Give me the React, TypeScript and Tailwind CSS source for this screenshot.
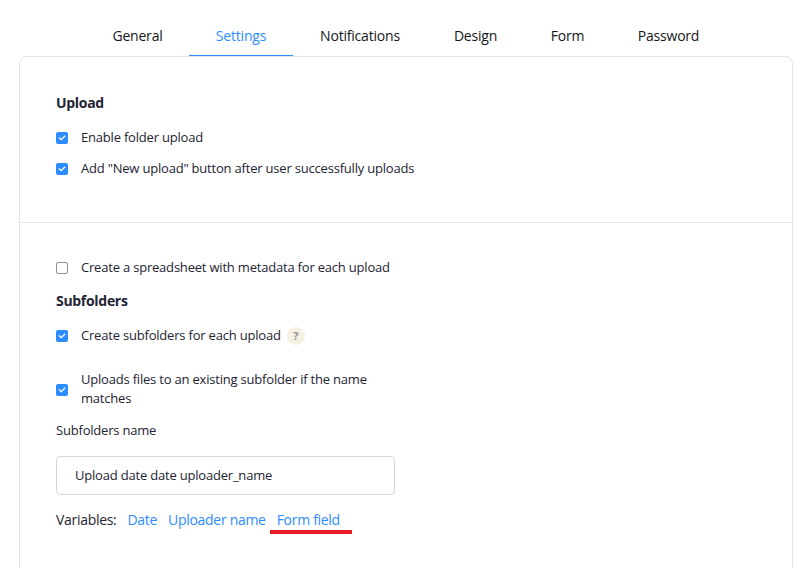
import React from "react";

function Box({ on = true, className = "" }: { on?: boolean; className?: string }) {
  if (!on) {
    return <span className={`block shrink-0 w-[12px] h-[12px] rounded-[2px] border border-[#8f8f8f] bg-white ${className}`} />;
  }
  return (
    <span className={`flex items-center justify-center shrink-0 w-[12px] h-[12px] rounded-[2px] bg-[#2d8cff] ${className}`}>
      <svg width="8" height="6" viewBox="0 0 8 6" fill="none">
        <path d="M0.8 2.4 L3.2 4.7 L7.2 0.8" stroke="#fff" strokeWidth="1.3" />
      </svg>
    </span>
  );
}

function Check({
  on = true,
  children,
  className = "",
  boxClass = "",
}: {
  on?: boolean;
  children: React.ReactNode;
  className?: string;
  boxClass?: string;
}) {
  return (
    <div className={`flex items-center gap-[13px] text-[13px] leading-[19px] tracking-[-0.2px] text-[#232333] ${className}`}>
      <Box on={on} className={boxClass} />
      {children}
    </div>
  );
}

const tabs = [
  ["General", "w-[103px]"],
  ["Settings", "w-[104px]"],
  ["Notifications", "w-[134px]"],
  ["Design", "w-[97px]"],
  ["Form", "w-[87px]"],
  ["Password", "w-[115px]"],
];

export default function App() {
  return (
    <div className="h-[567px] overflow-hidden bg-white font-['Open_Sans',sans-serif] text-[#232333]">
      <div className="flex pl-[86px] pt-[16px]">
        {tabs.map(([t, w]) => (
          <div
            key={t}
            className={`${w} h-[40px] text-center text-[14px] leading-[39px] tracking-[-0.2px] ${
              t === "Settings" ? "text-[#2d8cff] border-b border-[#2d8cff]" : "text-[#131619]"
            }`}
          >
            {t}
          </div>
        ))}
      </div>
      <div className="ml-[19px] w-[774px] h-[600px] rounded-[8px] border border-[#e4e4e6] bg-white">
        <div className="h-[166px] border-b border-[#e4e4e6] pl-[36px] pt-[36px]">
          <div className="text-[14px] leading-[20px] font-bold tracking-[-0.3px]">Upload</div>
          <Check className="mt-[15px]" boxClass="mt-[1px]">Enable folder upload</Check>
          <Check className="mt-[12px]" boxClass="mt-[1px]">Add "New upload" button after user successfully uploads</Check>
        </div>
        <div className="pl-[36px] pt-[35px]">
          <Check on={false} boxClass="mt-[1px]">Create a spreadsheet with metadata for each upload</Check>
          <div className="mt-[14px] text-[14px] leading-[20px] font-bold tracking-[-0.3px]">Subfolders</div>
          <Check className="mt-[15px]" boxClass="mt-[1px]">
            <span>Create subfolders for each upload</span>
            <span className="-ml-[7px] flex h-[18px] w-[18px] items-center justify-center rounded-full bg-[#f5f0e1] text-[11px] font-bold text-[#8a8f99]">
              ?
            </span>
          </Check>
          <Check className="mt-[25px]" boxClass="mt-[1px]">
            <span className="w-[310px]">Uploads files to an existing subfolder if the name matches</span>
          </Check>
          <div className="mt-[13px] text-[13px] leading-[19px] tracking-[-0.2px]">Subfolders name</div>
          <div className="mt-[16px] flex h-[39px] w-[339px] items-center rounded-[4px] border border-[#d8d8dc] pl-[18px] text-[13px] tracking-[-0.2px]">
            Upload date date uploader_name
          </div>
          <div className="mt-[15px] flex items-center text-[14px] leading-[20px] tracking-[-0.3px]">
            <span>Variables:</span>
            <span className="ml-[11px] text-[#2d8cff]">Date</span>
            <span className="ml-[11px] text-[#2d8cff]">Uploader name</span>
            <span className="relative ml-[11px] text-[#2d8cff]">
              Form field
              <span className="absolute -left-[7px] top-[20px] h-[4px] w-[82px] bg-[#e91c23]" />
            </span>
          </div>
        </div>
      </div>
    </div>
  );
}
